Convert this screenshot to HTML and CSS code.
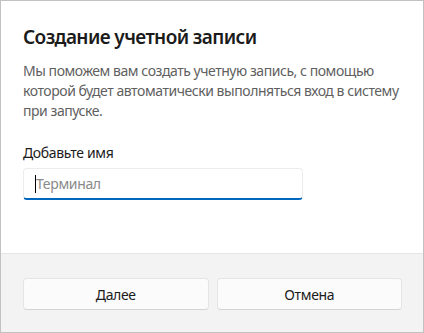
FILE: index.html
```html
<!DOCTYPE html>
<html>
<head>
    <meta name="viewport" content="width=device-width, initial-scale=1">
    <title>Создание учетной записи</title>
    <link rel="stylesheet" href="styles.css">
</head>
<body>
    <div class="dialog">
        <div class="content">
            <h1 class="title">Создание учетной записи</h1>
            <p class="description">Мы поможем вам создать учетную запись, с помощью которой будет автоматически выполняться вход в систему при запуске.</p>

            <label class="field-label" for="nameField">Добавьте имя</label>
            <div class="field" id="nameField">
                <span class="caret"></span>
                <span class="placeholder">Терминал</span>
            </div>
        </div>

        <div class="footer">
            <button class="btn">Далее</button>
            <button class="btn">Отмена</button>
        </div>
    </div>
</body>
</html>
```

FILE: styles.css
```css
body {
    margin: 0;
    font-family: "Noto Sans", "Open Sans", sans-serif;
    background-color: #ffffff;
    color: #1b1b1b;
}
.dialog {
    width: 424px;
    height: 333px;
    box-sizing: border-box;
    border: 1px solid #c2c2c2;
    display: flex;
    flex-direction: column;
}
.content {
    flex: 1;
    padding: 22px 12px 0 22px;
    background-color: #ffffff;
}
.title {
    margin: 0;
    font-size: 19px;
    font-weight: 600;
    line-height: 28px;
    letter-spacing: -0.6px;
    color: #1b1b1b;
}
.description {
    margin: 10px 0 0;
    font-size: 14px;
    line-height: 20px;
    letter-spacing: -0.45px;
    color: #5f5f5f;
}
.field-label {
    display: block;
    margin-top: 22px;
    font-size: 14px;
    line-height: 20px;
    letter-spacing: -0.35px;
    color: #1b1b1b;
}
.field {
    margin-top: 5px;
    width: 280px;
    height: 32px;
    box-sizing: border-box;
    border: 1px solid #ececec;
    border-bottom: 2px solid #0067c0;
    border-radius: 4px;
    padding: 0 11px;
    display: flex;
    align-items: center;
}
.caret {
    width: 1px;
    height: 18px;
    background-color: #000000;
}
.placeholder {
    font-size: 14px;
    letter-spacing: -0.35px;
    color: #8a8a8a;
}
.footer {
    height: 79px;
    box-sizing: border-box;
    background-color: #f3f3f3;
    border-top: 1px solid #e5e5e5;
    padding: 24px 21px 0 22px;
    display: grid;
    grid-template-columns: 1fr 1fr;
    column-gap: 8px;
    align-items: start;
}
.btn {
    height: 32px;
    background-color: #fbfbfb;
    border: 1px solid #e5e5e5;
    border-bottom-color: #d4d4d4;
    border-radius: 4px;
    font-family: inherit;
    font-size: 14px;
    letter-spacing: -0.35px;
    color: #1b1b1b;
}
```
